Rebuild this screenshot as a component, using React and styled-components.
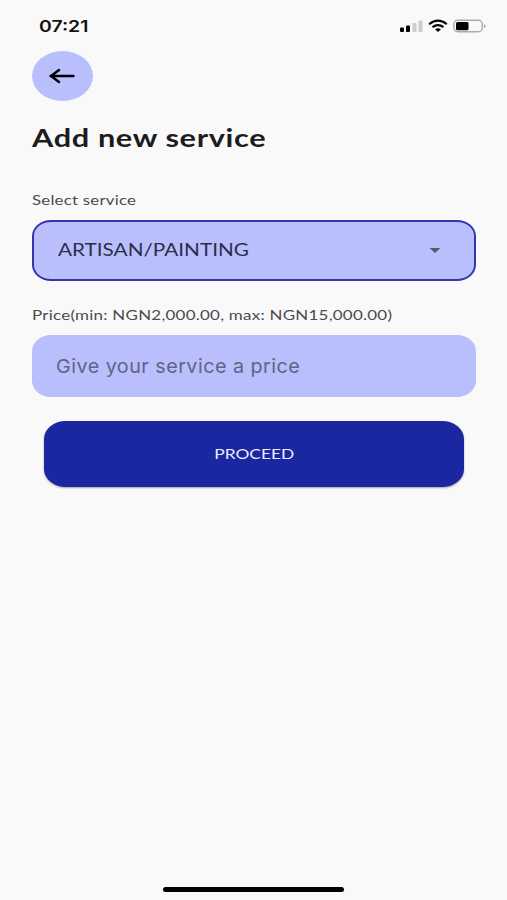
import React from 'react';
import styled, { createGlobalStyle } from 'styled-components';

const GlobalStyle = createGlobalStyle`
    * {
        box-sizing: border-box;
    }

    body {
        margin: 0;
        background-color: #f9f9f9;
    }
`;

const Screen = styled.div`
    height: 900px;
    display: flex;
    flex-direction: column;
    background-color: #f9f9f9;
    color: #1c1c1e;
    font-family: Lato, 'Open Sans', sans-serif;
    overflow: hidden;
`;

const StatusBar = styled.div`
    height: 51px;
    padding: 0 20px 0 39px;
    display: flex;
    align-items: center;
    justify-content: space-between;
`;

const StatusIcons = styled.svg`
    display: block;
    width: 88px;
    height: 16px;
`;

// The lettering is wider than the regular cut of the font
const Wide = styled.span`
    display: inline-block;
    white-space: nowrap;
    letter-spacing: ${(props) => props.$spacing || 0}px;
    transform: scaleX(${(props) => props.$stretch});
    transform-origin: ${(props) => props.$origin || 'left'} center;
`;

const Time = styled.div`
    font-family: Inter, sans-serif;
    font-size: 16px;
    line-height: 20px;
    font-weight: 600;
    color: #111;
`;

const Content = styled.main`
    flex: 1;
    padding: 0 31px 0 31.5px;
    display: flex;
    flex-direction: column;
`;

const BackButton = styled.button`
    width: 61px;
    height: 50px;
    padding: 0;
    border: 0;
    border-radius: 50%;
    background-color: #b9befc;
    display: flex;
    align-items: center;
    justify-content: center;
`;

const Title = styled.h1`
    margin: 20px 0 0;
    font-size: 24px;
    line-height: 34px;
    font-weight: 700;
`;

const Label = styled.div`
    margin-top: ${(props) => props.$top}px;
    height: 20px;
    font-size: 14px;
    line-height: 20px;
    color: #4b4b4d;
`;

const Select = styled.div`
    margin-top: 10px;
    height: 61px;
    padding: 0 33px 2px 24px;
    border: 2px solid #3534ad;
    border-radius: 19px / 16px;
    background-color: #b9befc;
    display: flex;
    align-items: center;
    justify-content: space-between;
    font-size: 17px;
    color: #2b2f48;
`;

const PriceInput = styled.div`
    margin-top: 10px;
    height: 62px;
    padding: 0 24px;
    border-radius: 19px / 16px;
    background-color: #b9befc;
    display: flex;
    align-items: center;
    font-family: Inter, sans-serif;
    font-size: 19px;
    color: #5f6485;
`;

const ProceedButton = styled.button`
    margin: 24px 12px 0;
    height: 66px;
    padding: 0 0 2px;
    border: 0;
    border-radius: 22px / 18px;
    background-color: #1a27a1;
    box-shadow: 0 1px 2px rgba(0, 0, 0, 0.35);
    color: #eceeff;
    font-family: inherit;
    font-size: 14px;
`;

const HomeIndicator = styled.div`
    width: 181px;
    height: 5px;
    margin: 0 auto 8px;
    border-radius: 3px;
    background-color: #000;
`;

export default () => {
    return (
        <>
            <GlobalStyle />
            <Screen>
                <StatusBar>
                    <Time>
                        <Wide $stretch={1.21}>07:21</Wide>
                    </Time>
                    <StatusIcons viewBox="0 0 88 16">
                        <rect x="1" y="9.5" width="4" height="4.5" rx="1" />
                        <rect x="7" y="7.5" width="4" height="6.5" rx="1" />
                        <rect x="13.5" y="5" width="4" height="9" rx="1" fill="#ccc" />
                        <rect x="19.5" y="2.5" width="4" height="11.5" rx="1" fill="#ccc" />
                        <g fill="none" stroke="#000" strokeWidth="2.1">
                            <path d="M30.2 6.2Q39 -0.8 47.8 6.2" />
                            <path d="M33.5 9.2Q39 5 44.5 9.2" />
                        </g>
                        <path d="M36 11.3Q39 9 42 11.3L39 14Z" />
                        <rect x="54.8" y="2.3" width="28.5" height="11.5" rx="4" fill="none" stroke="#aaa" strokeWidth="1.4" />
                        <rect x="57" y="4" width="12.5" height="8.2" rx="1.5" />
                        <path d="M85 6.2Q88.5 8 85 10Z" fill="#999" />
                    </StatusIcons>
                </StatusBar>
                <Content>
                    <BackButton aria-label="Back">
                        <svg width="28" height="18" viewBox="0 0 28 18">
                            <path
                                d="M25.5 9H2.5M11 3L3 9L11 15"
                                fill="none"
                                stroke="#000"
                                strokeWidth="2.4"
                                strokeLinecap="round"
                                strokeLinejoin="round"
                            />
                        </svg>
                    </BackButton>
                    <Title>
                        <Wide $stretch={1.28} $spacing={0.5}>
                            Add new service
                        </Wide>
                    </Title>
                    <Label $top={35}>
                        <Wide $stretch={1.2} $spacing={0.2}>
                            Select service
                        </Wide>
                    </Label>
                    <Select>
                        <Wide $stretch={1.22}>ARTISAN/PAINTING</Wide>
                        <svg width="12" height="6" viewBox="0 0 12 6">
                            <path d="M0.5 1H11.5L6 6Z" fill="#555a66" />
                        </svg>
                    </Select>
                    <Label $top={24}>
                        <Wide $stretch={1.21} $spacing={0.21}>
                            Price(min: NGN2,000.00, max: NGN15,000.00)
                        </Wide>
                    </Label>
                    <PriceInput>
                        <Wide $stretch={1.04} $spacing={0.45}>
                            Give your service a price
                        </Wide>
                    </PriceInput>
                    <ProceedButton>
                        <Wide $stretch={1.24} $origin="center">
                            PROCEED
                        </Wide>
                    </ProceedButton>
                </Content>
                <HomeIndicator />
            </Screen>
        </>
    );
};
